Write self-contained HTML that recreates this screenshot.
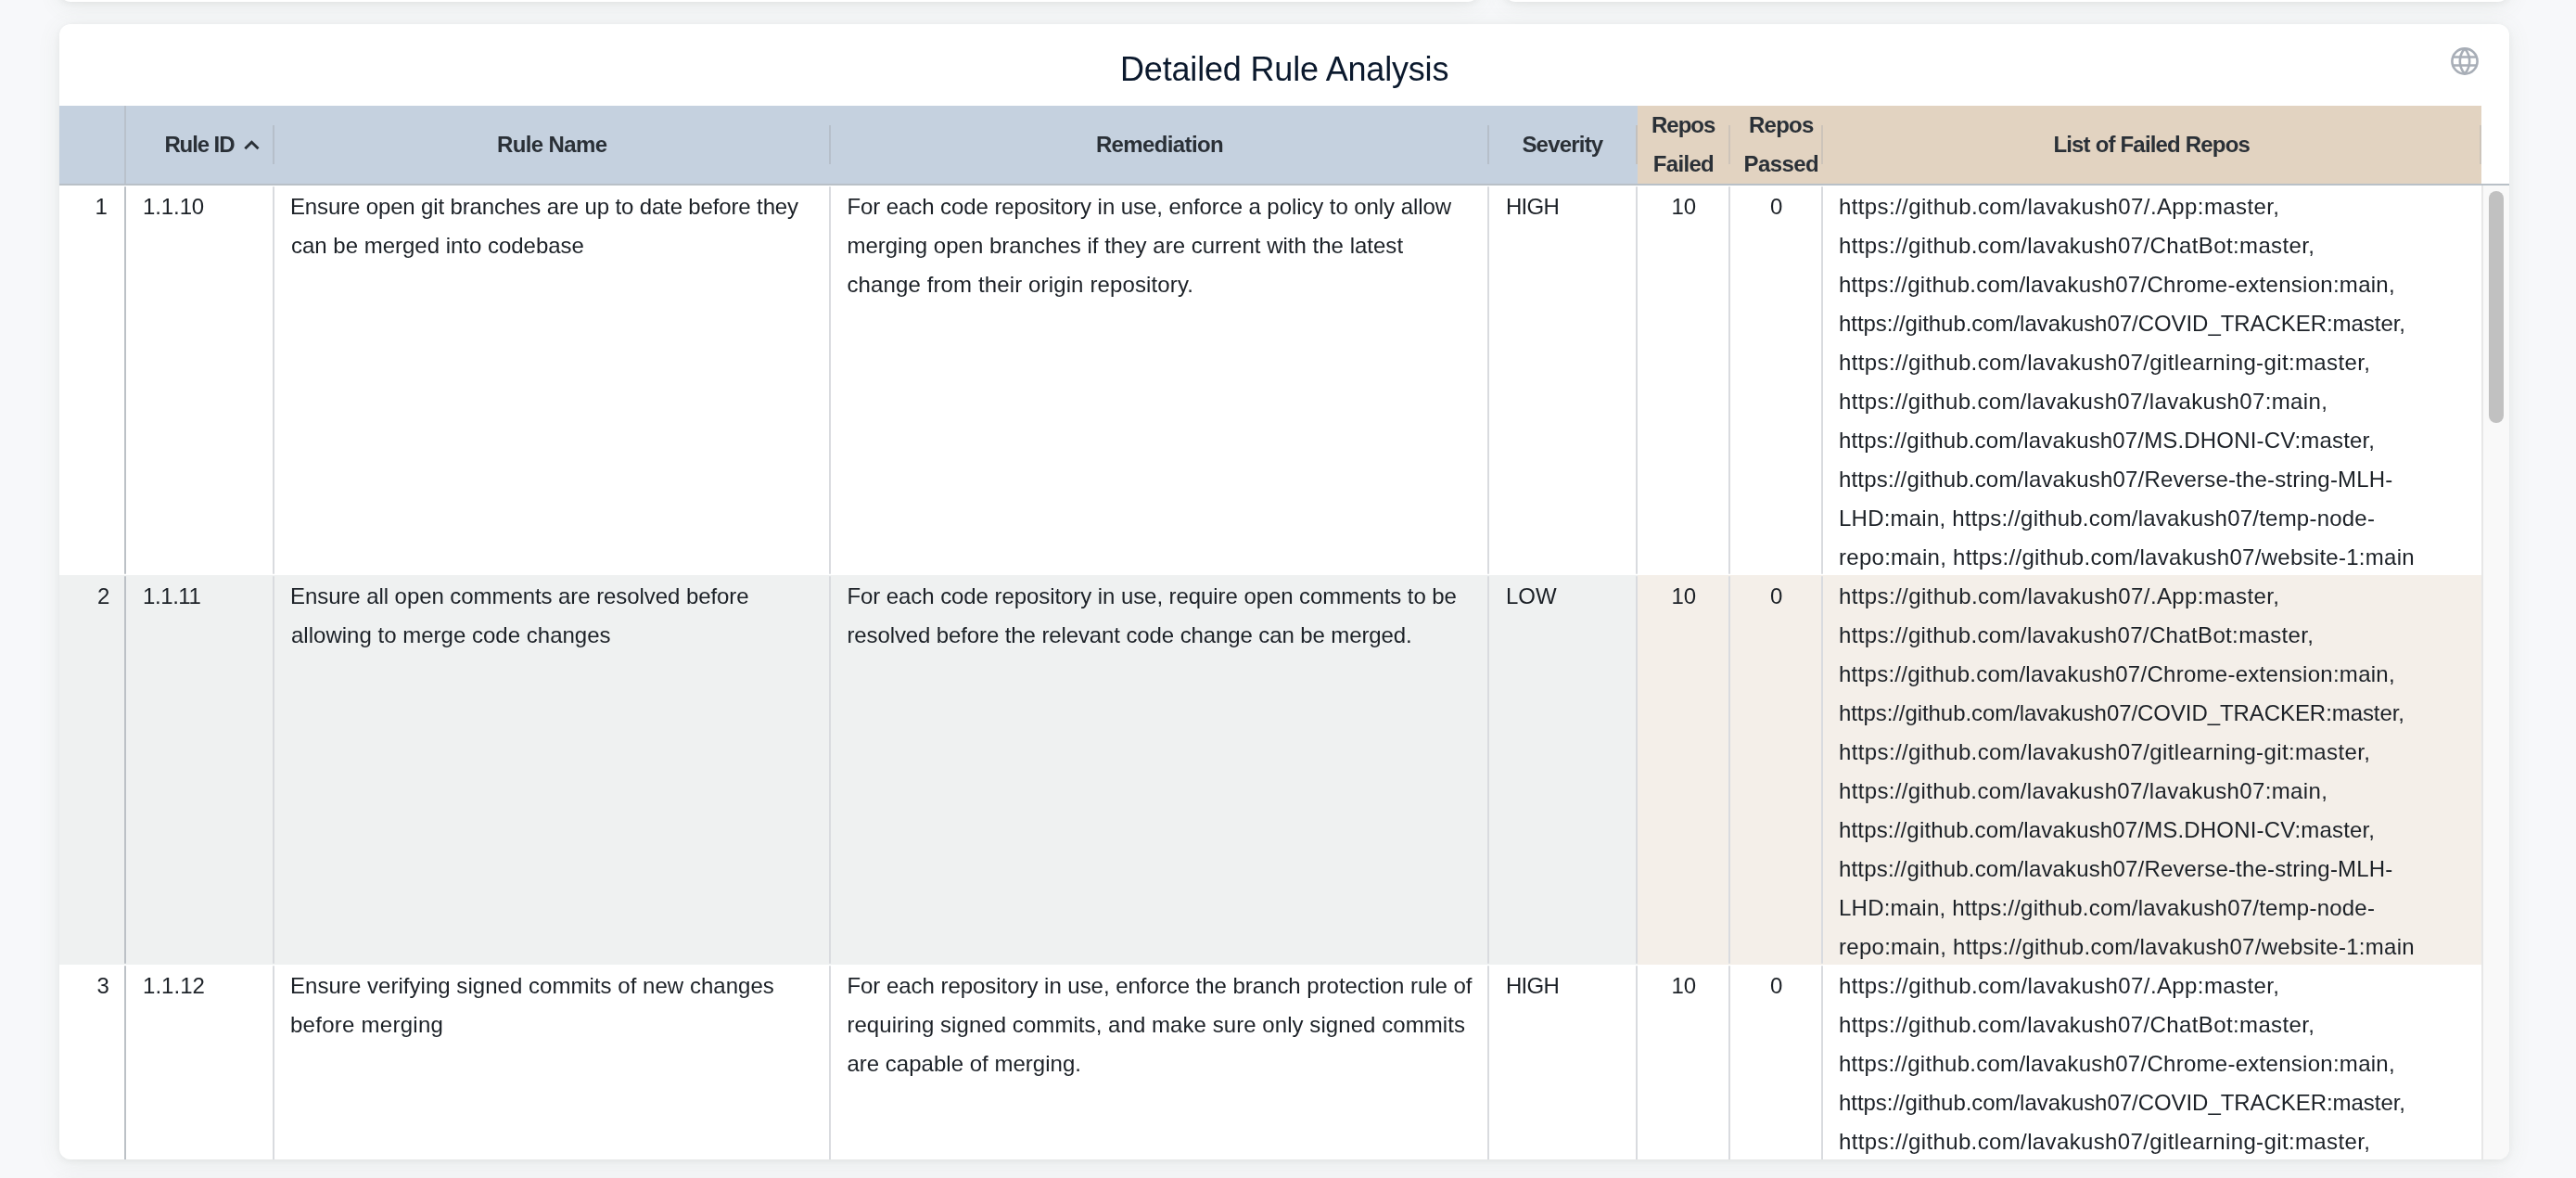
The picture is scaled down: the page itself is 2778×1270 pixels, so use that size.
<!DOCTYPE html>
<html><head><meta charset="utf-8"><style>
html,body{margin:0;padding:0;}
body{width:2778px;height:1270px;overflow:hidden;background:#f7f8fa;position:relative;font-family:"Liberation Sans",sans-serif;}
.card{position:absolute;background:#fff;border-radius:12px;box-shadow:0 2px 6px rgba(60,70,60,0.06),0 4px 24px rgba(100,115,90,0.10);}
.clip{position:absolute;left:64px;top:26px;width:2642px;height:1224px;border-radius:12px;overflow:hidden;}
.in{position:absolute;left:-64px;top:-26px;width:2778px;height:1270px;will-change:transform;}
.t,.h,.ttl{position:absolute;white-space:nowrap;}
.t{font-size:24px;line-height:42px;height:42px;color:#1c2127;}
.h{font-size:24px;line-height:42px;height:42px;font-weight:bold;color:#2a3037;}
.ttl{font-size:36px;line-height:50px;height:50px;color:#0b192d;}
.v,.r{position:absolute;}
</style></head><body>
<div class="card" style="left:64px;top:-40px;width:1531px;height:42px"></div>
<div class="card" style="left:1622px;top:-40px;width:1084px;height:42px"></div>
<div class="card" style="left:64px;top:26px;width:2642px;height:1224px"></div>
<div class="card" style="left:64px;top:1274px;width:2642px;height:300px"></div>
<div class="clip"><div class="in">
<div class="r" style="left:64px;top:114px;width:1702px;height:84px;background:#c5d1df;"></div>
<div class="r" style="left:1766px;top:114px;width:910px;height:84px;background:#e2d3c1;"></div>
<div class="r" style="left:64px;top:198px;width:2642px;height:2px;background:#b9c0c7;"></div>
<div class="r" style="left:64px;top:620px;width:1702px;height:420px;background:#eff1f1;"></div>
<div class="r" style="left:1766px;top:620px;width:910px;height:420px;background:#f4efe9;"></div>
<div class="r" style="left:2676px;top:200px;width:30px;height:1050px;background:#f9f9f9;"></div>
<div class="r" style="left:2676px;top:200px;width:2px;height:1050px;background:#e7e7e7;"></div>
<div class="r" style="left:2684px;top:206px;width:16px;height:250px;background:#c1c1c1;border-radius:8px"></div>
<div class="r" style="left:134px;top:114px;width:2px;height:84px;background:#b9c1cb;"></div>
<div class="r" style="left:294px;top:135px;width:2px;height:42px;background:#b6bfca;"></div>
<div class="r" style="left:894px;top:135px;width:2px;height:42px;background:#b6bfca;"></div>
<div class="r" style="left:1604px;top:135px;width:2px;height:42px;background:#b6bfca;"></div>
<div class="r" style="left:1764px;top:135px;width:2px;height:42px;background:#c3c0bd;"></div>
<div class="r" style="left:1864px;top:135px;width:2px;height:42px;background:#cdc4ba;"></div>
<div class="r" style="left:1964px;top:135px;width:2px;height:42px;background:#cdc4ba;"></div>
<div class="r" style="left:2674px;top:135px;width:2px;height:42px;background:#cdc4ba;"></div>
<div class="r" style="left:134px;top:201px;width:2px;height:418px;background:#bcc1c6;border-radius:1px"></div>
<div class="r" style="left:294px;top:201px;width:2px;height:418px;background:#d9dbdf;border-radius:1px"></div>
<div class="r" style="left:894px;top:201px;width:2px;height:418px;background:#d9dbdf;border-radius:1px"></div>
<div class="r" style="left:1604px;top:201px;width:2px;height:418px;background:#d9dbdf;border-radius:1px"></div>
<div class="r" style="left:1764px;top:201px;width:2px;height:418px;background:#d9dbdf;border-radius:1px"></div>
<div class="r" style="left:1864px;top:201px;width:2px;height:418px;background:#d9dbdf;border-radius:1px"></div>
<div class="r" style="left:1964px;top:201px;width:2px;height:418px;background:#d9dbdf;border-radius:1px"></div>
<div class="r" style="left:134px;top:621px;width:2px;height:418px;background:#bcc1c6;border-radius:1px"></div>
<div class="r" style="left:294px;top:621px;width:2px;height:418px;background:#d9dbdf;border-radius:1px"></div>
<div class="r" style="left:894px;top:621px;width:2px;height:418px;background:#d9dbdf;border-radius:1px"></div>
<div class="r" style="left:1604px;top:621px;width:2px;height:418px;background:#d9dbdf;border-radius:1px"></div>
<div class="r" style="left:1764px;top:621px;width:2px;height:418px;background:#d9dbdf;border-radius:1px"></div>
<div class="r" style="left:1864px;top:621px;width:2px;height:418px;background:#d9dbdf;border-radius:1px"></div>
<div class="r" style="left:1964px;top:621px;width:2px;height:418px;background:#d9dbdf;border-radius:1px"></div>
<div class="r" style="left:134px;top:1041px;width:2px;height:418px;background:#bcc1c6;border-radius:1px"></div>
<div class="r" style="left:294px;top:1041px;width:2px;height:418px;background:#d9dbdf;border-radius:1px"></div>
<div class="r" style="left:894px;top:1041px;width:2px;height:418px;background:#d9dbdf;border-radius:1px"></div>
<div class="r" style="left:1604px;top:1041px;width:2px;height:418px;background:#d9dbdf;border-radius:1px"></div>
<div class="r" style="left:1764px;top:1041px;width:2px;height:418px;background:#d9dbdf;border-radius:1px"></div>
<div class="r" style="left:1864px;top:1041px;width:2px;height:418px;background:#d9dbdf;border-radius:1px"></div>
<div class="r" style="left:1964px;top:1041px;width:2px;height:418px;background:#d9dbdf;border-radius:1px"></div>
<svg style="position:absolute;left:2640px;top:48px" width="36" height="36" viewBox="0 0 36 36">
<defs><clipPath id="gc"><circle cx="18" cy="18" r="14"/></clipPath></defs>
<g fill="none" stroke="#a8aeb7" stroke-width="2.6">
<circle cx="18" cy="18" r="13.6"/>
<g clip-path="url(#gc)">
<path d="M18 4.4A20.4 20.4 0 0 0 18 31.6A20.4 20.4 0 0 0 18 4.4Z"/>
<line x1="2" y1="13.5" x2="34" y2="13.5"/>
<line x1="2" y1="22.5" x2="34" y2="22.5"/>
</g></g></svg>
<svg style="position:absolute;left:262px;top:150px" width="20" height="14" viewBox="0 0 20 14"><polyline points="2.3,10.3 9.4,3.2 16.5,10.3" fill="none" stroke="#2a3037" stroke-width="2.9"/></svg>
<div id="title" class="ttl" style="left:1208.00px;top:50px;letter-spacing:-0.179px">Detailed Rule Analysis</div>
<div id="h_rid" class="h" style="left:177.40px;top:135px;letter-spacing:-1.101px">Rule ID</div>
<div id="h_rn" class="h" style="left:536.00px;top:135px;letter-spacing:-0.625px">Rule Name</div>
<div id="h_rem" class="h" style="left:1181.90px;top:135px;letter-spacing:-0.620px">Remediation</div>
<div id="h_sev" class="h" style="left:1641.40px;top:135px;letter-spacing:-0.796px">Severity</div>
<div id="h_rf1" class="h" style="left:1781.00px;top:114px;letter-spacing:-1.000px">Repos</div>
<div id="h_rf2" class="h" style="left:1782.80px;top:156px;letter-spacing:-0.680px">Failed</div>
<div id="h_rp1" class="h" style="left:1886.00px;top:114px;letter-spacing:-0.750px">Repos</div>
<div id="h_rp2" class="h" style="left:1880.50px;top:156px;letter-spacing:-0.600px">Passed</div>
<div id="h_list" class="h" style="left:2214.40px;top:135px;letter-spacing:-0.817px">List of Failed Repos</div>
<div id="r0_idx" class="t" style="left:102.40px;top:202px">1</div>
<div id="r0_rid" class="t" style="left:154.10px;top:202px;letter-spacing:-0.120px">1.1.10</div>
<div id="r0_n0" class="t" style="left:313.00px;top:202px;letter-spacing:-0.140px">Ensure open git branches are up to date before they</div>
<div id="r0_n1" class="t" style="left:314.00px;top:244px;letter-spacing:-0.010px">can be merged into codebase</div>
<div id="r0_m0" class="t" style="left:913.40px;top:202px;letter-spacing:-0.076px">For each code repository in use, enforce a policy to only allow</div>
<div id="r0_m1" class="t" style="left:913.40px;top:244px;letter-spacing:0.012px">merging open branches if they are current with the latest</div>
<div id="r0_m2" class="t" style="left:913.40px;top:286px;letter-spacing:0.128px">change from their origin repository.</div>
<div id="r0_sev" class="t" style="left:1623.90px;top:202px;letter-spacing:-0.668px">HIGH</div>
<div id="r0_f" class="t" style="left:1802.50px;top:202px">10</div>
<div id="r0_p" class="t" style="left:1909.10px;top:202px">0</div>
<div id="r0_l0" class="t" style="left:1983.00px;top:202px;letter-spacing:0.390px">https://github.com/lavakush07/.App:master,</div>
<div id="r0_l1" class="t" style="left:1983.00px;top:244px;letter-spacing:0.380px">https://github.com/lavakush07/ChatBot:master,</div>
<div id="r0_l2" class="t" style="left:1983.00px;top:286px;letter-spacing:0.275px">https://github.com/lavakush07/Chrome-extension:main,</div>
<div id="r0_l3" class="t" style="left:1983.00px;top:328px;letter-spacing:-0.052px">https://github.com/lavakush07/COVID_TRACKER:master,</div>
<div id="r0_l4" class="t" style="left:1983.00px;top:370px;letter-spacing:0.370px">https://github.com/lavakush07/gitlearning-git:master,</div>
<div id="r0_l5" class="t" style="left:1983.00px;top:412px;letter-spacing:0.353px">https://github.com/lavakush07/lavakush07:main,</div>
<div id="r0_l6" class="t" style="left:1983.00px;top:454px;letter-spacing:0.167px">https://github.com/lavakush07/MS.DHONI-CV:master,</div>
<div id="r0_l7" class="t" style="left:1983.00px;top:496px;letter-spacing:0.173px">https://github.com/lavakush07/Reverse-the-string-MLH-</div>
<div id="r0_l8" class="t" style="left:1983.00px;top:538px;letter-spacing:0.224px">LHD:main, https://github.com/lavakush07/temp-node-</div>
<div id="r0_l9" class="t" style="left:1983.00px;top:580px;letter-spacing:0.278px">repo:main, https://github.com/lavakush07/website-1:main</div>
<div id="r1_idx" class="t" style="left:104.90px;top:622px">2</div>
<div id="r1_rid" class="t" style="left:154.10px;top:622px;letter-spacing:-0.440px">1.1.11</div>
<div id="r1_n0" class="t" style="left:313.00px;top:622px;letter-spacing:-0.070px">Ensure all open comments are resolved before</div>
<div id="r1_n1" class="t" style="left:314.00px;top:664px;letter-spacing:0.013px">allowing to merge code changes</div>
<div id="r1_m0" class="t" style="left:913.40px;top:622px;letter-spacing:-0.070px">For each code repository in use, require open comments to be</div>
<div id="r1_m1" class="t" style="left:913.40px;top:664px;letter-spacing:-0.107px">resolved before the relevant code change can be merged.</div>
<div id="r1_sev" class="t" style="left:1623.90px;top:622px">LOW</div>
<div id="r1_f" class="t" style="left:1802.50px;top:622px">10</div>
<div id="r1_p" class="t" style="left:1909.10px;top:622px">0</div>
<div id="r1_l0" class="t" style="left:1983.00px;top:622px;letter-spacing:0.390px">https://github.com/lavakush07/.App:master,</div>
<div id="r1_l1" class="t" style="left:1983.00px;top:664px;letter-spacing:0.357px">https://github.com/lavakush07/ChatBot:master,</div>
<div id="r1_l2" class="t" style="left:1983.00px;top:706px;letter-spacing:0.275px">https://github.com/lavakush07/Chrome-extension:main,</div>
<div id="r1_l3" class="t" style="left:1983.00px;top:748px;letter-spacing:-0.072px">https://github.com/lavakush07/COVID_TRACKER:master,</div>
<div id="r1_l4" class="t" style="left:1983.00px;top:790px;letter-spacing:0.370px">https://github.com/lavakush07/gitlearning-git:master,</div>
<div id="r1_l5" class="t" style="left:1983.00px;top:832px;letter-spacing:0.353px">https://github.com/lavakush07/lavakush07:main,</div>
<div id="r1_l6" class="t" style="left:1983.00px;top:874px;letter-spacing:0.167px">https://github.com/lavakush07/MS.DHONI-CV:master,</div>
<div id="r1_l7" class="t" style="left:1983.00px;top:916px;letter-spacing:0.173px">https://github.com/lavakush07/Reverse-the-string-MLH-</div>
<div id="r1_l8" class="t" style="left:1983.00px;top:958px;letter-spacing:0.224px">LHD:main, https://github.com/lavakush07/temp-node-</div>
<div id="r1_l9" class="t" style="left:1983.00px;top:1000px;letter-spacing:0.278px">repo:main, https://github.com/lavakush07/website-1:main</div>
<div id="r2_idx" class="t" style="left:104.50px;top:1042px">3</div>
<div id="r2_rid" class="t" style="left:154.10px;top:1042px">1.1.12</div>
<div id="r2_n0" class="t" style="left:313.00px;top:1042px;letter-spacing:0.036px">Ensure verifying signed commits of new changes</div>
<div id="r2_n1" class="t" style="left:313.00px;top:1084px;letter-spacing:0.263px">before merging</div>
<div id="r2_m0" class="t" style="left:913.40px;top:1042px;letter-spacing:-0.036px">For each repository in use, enforce the branch protection rule of</div>
<div id="r2_m1" class="t" style="left:913.40px;top:1084px;letter-spacing:0.061px">requiring signed commits, and make sure only signed commits</div>
<div id="r2_m2" class="t" style="left:913.40px;top:1126px;letter-spacing:0.018px">are capable of merging.</div>
<div id="r2_sev" class="t" style="left:1623.90px;top:1042px;letter-spacing:-0.668px">HIGH</div>
<div id="r2_f" class="t" style="left:1802.50px;top:1042px">10</div>
<div id="r2_p" class="t" style="left:1909.10px;top:1042px">0</div>
<div id="r2_l0" class="t" style="left:1983.00px;top:1042px;letter-spacing:0.390px">https://github.com/lavakush07/.App:master,</div>
<div id="r2_l1" class="t" style="left:1983.00px;top:1084px;letter-spacing:0.380px">https://github.com/lavakush07/ChatBot:master,</div>
<div id="r2_l2" class="t" style="left:1983.00px;top:1126px;letter-spacing:0.275px">https://github.com/lavakush07/Chrome-extension:main,</div>
<div id="r2_l3" class="t" style="left:1983.00px;top:1168px;letter-spacing:-0.052px">https://github.com/lavakush07/COVID_TRACKER:master,</div>
<div id="r2_l4" class="t" style="left:1983.00px;top:1210px;letter-spacing:0.370px">https://github.com/lavakush07/gitlearning-git:master,</div>
</div></div></body></html>
